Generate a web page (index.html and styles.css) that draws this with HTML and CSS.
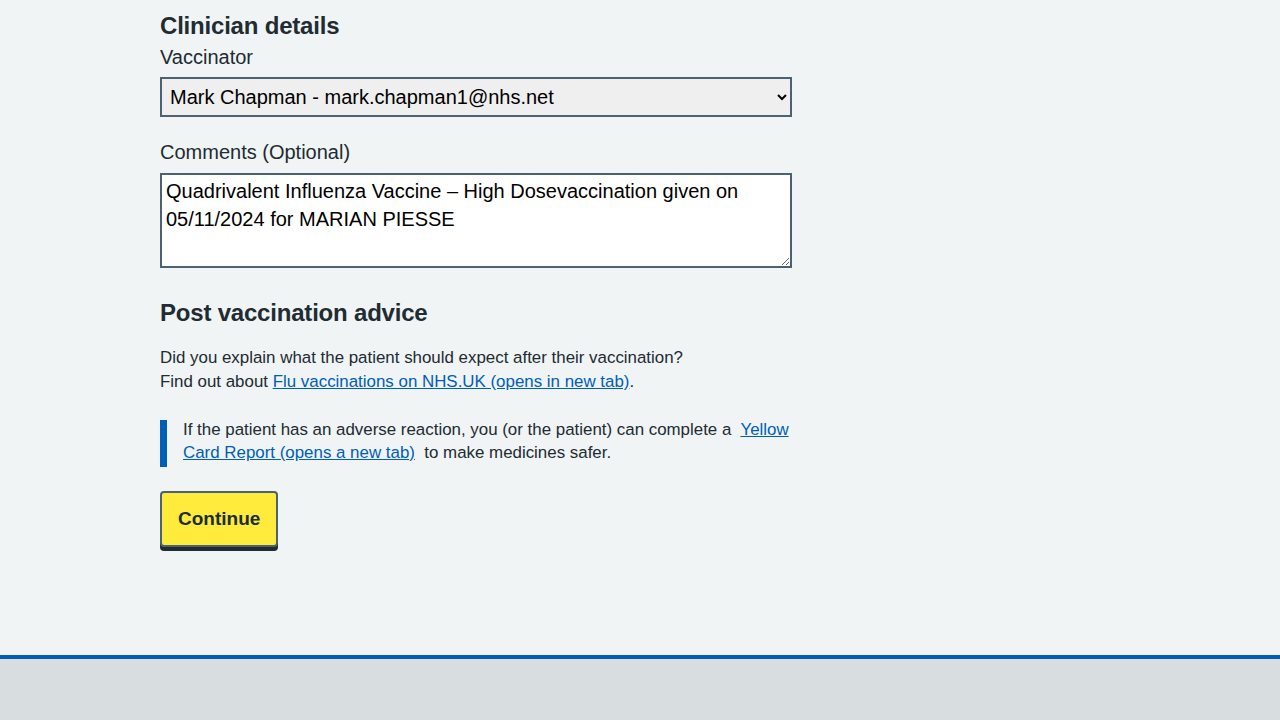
FILE: index.html
```html
<!DOCTYPE html>
<html lang="en">
<head>
<meta charset="utf-8">
<title>Clinician details</title>
<link rel="stylesheet" href="styles.css">
</head>
<body>
<main class="main">
  <div class="width-container">
    <div class="column">
      <h2 class="heading">Clinician details</h2>
      <div class="form-group">
        <label class="label" for="vaccinator">Vaccinator</label>
        <select class="select" id="vaccinator">
          <option>Mark Chapman - mark.chapman1@nhs.net</option>
        </select>
      </div>
      <div class="form-group">
        <label class="label" for="comments">Comments (Optional)</label>
        <textarea class="textarea" id="comments" rows="3">Quadrivalent Influenza Vaccine – High Dosevaccination given on 05/11/2024 for MARIAN PIESSE</textarea>
      </div>
      <h2 class="heading heading-advice">Post vaccination advice</h2>
      <p class="body">Did you explain what the patient should expect after their vaccination?<br>Find out about <a class="link" href="#">Flu vaccinations on NHS.UK (opens in new tab)</a>.</p>
      <div class="inset">
        <p class="inset-text">If the patient has an adverse reaction, you (or the patient) can complete a&nbsp; <a class="link" href="#">Yellow Card Report (opens a new tab)</a>&nbsp; to make medicines safer.</p>
      </div>
      <button class="button" type="button">Continue</button>
    </div>
  </div>
</main>
<footer class="footer"></footer>
</body>
</html>
```
FILE: styles.css
```css
* { box-sizing: border-box; }
html, body { margin: 0; padding: 0; }
body {
  background: #f0f4f5;
  color: #212b32;
  font-family: "Liberation Sans", Arial, sans-serif;
  height: 720px;
  overflow: hidden;
}
.main { height: 655px; }
.width-container { width: 960px; margin: 0 auto; }
.column { width: 632px; padding-top: 10px; }
.heading {
  font-size: 24px;
  line-height: 32px;
  font-weight: 700;
  margin: 0;
  letter-spacing: -0.2px;
}
.form-group { margin-bottom: 21px; }
.label {
  display: block;
  font-size: 20px;
  line-height: 28px;
  margin: 1px 0 6px;
}
.select {
  display: block;
  width: 632px;
  height: 40px;
  border: 2px solid #4c6272;
  background: #efefef;
  color: #000;
  font-family: inherit;
  font-size: 20px;
  padding: 0 4px 0 4px;
  border-radius: 0;
}
.textarea {
  display: block;
  width: 632px;
  height: 95px;
  border: 2px solid #4c6272;
  background: #fff;
  color: #000;
  font-family: inherit;
  font-size: 20px;
  line-height: 28px;
  padding: 2px 4px;
  margin-top: 7px;
  resize: vertical;
}
.heading-advice { margin-top: 29px; }
.body {
  font-size: 16.9px;
  line-height: 24px;
  margin: 17px 0 26px;
}
.link { color: #005eb8; text-decoration: underline; }
.inset {
  display: flow-root;
  border-left: 7px solid #005eb8;
  padding-left: 16px;
  margin-bottom: 24px;
}
.inset-text {
  font-size: 16.9px;
  line-height: 23px;
  margin: -2px 0 0;
  padding: 0 0 3px;
}
.button {
  display: block;
  background: #ffeb3b;
  color: #212b32;
  border: 2px solid #4c6272;
  border-radius: 4px;
  box-shadow: 0 4px 0 #212b32;
  font-family: inherit;
  font-weight: 700;
  font-size: 19px;
  line-height: 28px;
  padding: 12px 16px;
  height: 56px;
  cursor: pointer;
}
.footer {
  border-top: 4px solid #005eb8;
  background: #d8dde0;
  height: 65px;
}
```
